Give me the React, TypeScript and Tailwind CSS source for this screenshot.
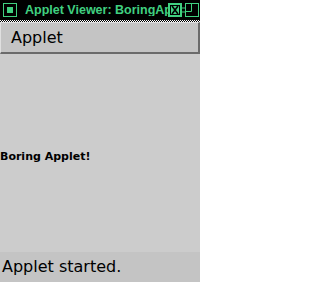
import React from 'react';

const App: React.FC = () => {
  return (
    <div className="w-[200px] h-[282px] flex flex-col bg-[#cccccc] overflow-hidden font-['DejaVu_Sans',sans-serif]">
      {/* Title bar */}
      <div className="h-[20px] bg-black flex items-center shrink-0">
        <div className="ml-[3px] shrink-0 w-[14px] h-[14px] border border-[#40d080] flex items-center justify-center">
          <div className="w-[6px] h-[6px] bg-[#40d080]" />
        </div>
        <div className="ml-[8px] flex-1 min-w-0 overflow-hidden">
          <span className="block text-[12.5px] leading-none font-bold text-[#40d080] whitespace-nowrap font-['Liberation_Sans',sans-serif]">
            Applet Viewer: BoringApplet
          </span>
        </div>
        <svg width="32" height="16" viewBox="0 0 32 16" className="block shrink-0">
          <rect x="0.5" y="1.5" width="13" height="13" fill="#40d080" stroke="#40d080" />
          <rect x="2.5" y="3.5" width="9" height="9" fill="none" stroke="#000" />
          <path d="M4 4 L10 12 M10 4 L4 12" stroke="#000" strokeWidth="1.6" />
          <path d="M14 6 H17 M14 10 H17" stroke="#40d080" />
          <rect x="17.5" y="1.5" width="13" height="13" fill="none" stroke="#40d080" />
          <path d="M17.5 9.5 H23.5 V1.5" fill="none" stroke="#40d080" />
        </svg>
      </div>
      <div className="h-[2px] shrink-0 bg-[conic-gradient(#000_25%,#fff_0_50%,#000_0_75%,#fff_0)] bg-[length:2px_2px]" />

      {/* Applet label panel */}
      <div className="h-[32px] shrink-0 bg-[#c4c4c4] border-t border-l border-[#e0e0e0] border-b-2 border-r-2 border-b-[#6b6b6b] border-r-[#6b6b6b] flex items-center pl-[10px]">
        <span className="text-[16px] leading-none text-black">Applet</span>
      </div>

      {/* Applet content */}
      <div className="flex-1 pt-[97px]">
        <span className="block text-[11px] leading-none font-bold text-black">Boring Applet!</span>
      </div>

      {/* Status bar */}
      <div className="h-[30px] shrink-0 bg-[#c4c4c4] flex items-center pl-[2px]">
        <span className="text-[16px] leading-none text-black">Applet started.</span>
      </div>
    </div>
  );
};

export default App;
